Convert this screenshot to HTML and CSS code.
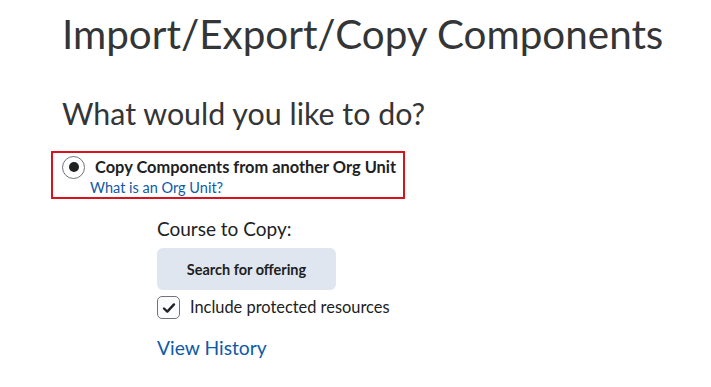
FILE: index.html
```html
<!DOCTYPE html>
<html lang="en">
<head>
    <meta charset="UTF-8">
    <meta name="viewport" content="width=device-width, initial-scale=1.0">
    <title>Import/Export/Copy Components</title>
    <link rel="stylesheet" href="styles.css">
</head>
<body>
    <div class="page">
        <h1>Import/Export/Copy Components</h1>
        <h2>What would you like to do?</h2>

        <div class="choice">
            <label class="radio-row">
                <span class="radio"><span class="radio-dot"></span></span>
                <span class="radio-label">Copy Components from another Org Unit</span>
            </label>
            <a class="help-link" href="#">What is an Org Unit?</a>
        </div>

        <div class="copy-options">
            <div class="field-label">Course to Copy:</div>
            <button class="search-btn">Search for offering</button>
            <label class="check-row">
                <span class="checkbox">
                    <svg width="14" height="12" viewBox="0 0 14 12"><path d="M2 6.5 L5.3 9.6 L12 2.4" fill="none" stroke="#202122" stroke-width="2.4" stroke-linecap="round" stroke-linejoin="round"/></svg>
                </span>
                <span class="check-label">Include protected resources</span>
            </label>
            <a class="history-link" href="#">View History</a>
        </div>
    </div>
</body>
</html>
```

FILE: styles.css
```css
body {
    margin: 0;
    font-family: 'Lato', 'Noto Sans', sans-serif;
    color: #202122;
    background-color: white;
}

.page {
    padding: 8px 0 0 62px;
}

h1 {
    font-size: 40.4px;
    font-weight: 400;
    line-height: 52px;
    margin: 0;
    color: #333536;
}

h2 {
    font-size: 30.4px;
    font-weight: 400;
    line-height: 40px;
    margin: 33px 0 0 0;
    color: #333536;
}

.choice {
    display: flex;
    flex-direction: column;
    width: fit-content;
    margin: 18px 0 0 -11px;
    padding: 1px 7px 1px 9px;
    border: 2px solid #d9121f;
}

.radio-row {
    display: flex;
    align-items: center;
    gap: 10px;
}

.radio {
    width: 21px;
    height: 21px;
    border: 1.5px solid #6e7477;
    border-radius: 50%;
    display: flex;
    align-items: center;
    justify-content: center;
}

.radio-dot {
    width: 10px;
    height: 10px;
    border-radius: 50%;
    background-color: #202122;
}

.radio-label {
    font-size: 16.4px;
    font-weight: 700;
    line-height: 26px;
}

.help-link {
    font-size: 14.5px;
    line-height: 16px;
    color: #0f5aa7;
    text-decoration: none;
    margin-left: 28px;
}

.copy-options {
    padding-left: 95px;
    margin-top: 18px;
}

.field-label {
    font-size: 19px;
    line-height: 24px;
}

.search-btn {
    display: block;
    margin-top: 7px;
    width: 179px;
    height: 42px;
    border: none;
    border-radius: 6px;
    background-color: #dfe6ef;
    font-family: inherit;
    font-size: 14.5px;
    font-weight: 700;
    color: #202122;
}

.check-row {
    display: flex;
    align-items: center;
    gap: 10px;
    margin-top: 6px;
    font-size: 16.4px;
}

.check-label {
    padding-bottom: 3px;
}

.checkbox {
    width: 21px;
    height: 21px;
    border: 1.5px solid #6e7477;
    border-radius: 5px;
    display: flex;
    align-items: center;
    justify-content: center;
    background-color: #f9fbff;
}

.history-link {
    display: block;
    width: fit-content;
    margin-top: 17px;
    font-size: 19.3px;
    line-height: 24px;
    color: #0f5aa7;
    text-decoration: none;
}
```
